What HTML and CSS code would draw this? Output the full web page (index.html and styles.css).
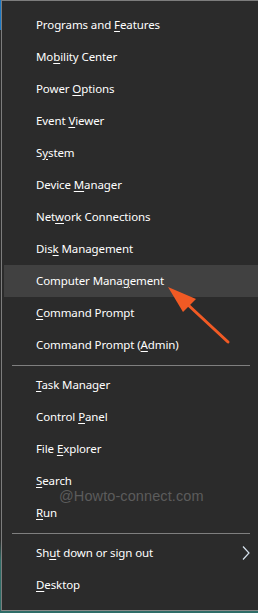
FILE: index.html
```html
<!DOCTYPE html>
<html lang="en">
<head>
  <meta charset="UTF-8" />
  <meta name="viewport" content="width=device-width, initial-scale=1.0" />
  <title>Quick Link Menu</title>
  <link rel="stylesheet" href="styles.css">
</head>
<body>

  <!-- Win+X menu -->
  <div class="menu">
    <div class="item"><span>Programs and <u>F</u>eatures</span></div>
    <div class="item"><span>Mo<u>b</u>ility Center</span></div>
    <div class="item"><span>Power <u>O</u>ptions</span></div>
    <div class="item"><span>Event <u>V</u>iewer</span></div>
    <div class="item"><span>S<u>y</u>stem</span></div>
    <div class="item"><span>Device <u>M</u>anager</span></div>
    <div class="item"><span>Net<u>w</u>ork Connections</span></div>
    <div class="item"><span>Dis<u>k</u> Management</span></div>
    <div class="item active"><span>Computer Mana<u>g</u>ement</span></div>
    <div class="item"><span><u>C</u>ommand Prompt</span></div>
    <div class="item"><span>Command Prompt (<u>A</u>dmin)</span></div>

    <div class="sep"></div>

    <div class="item"><span><u>T</u>ask Manager</span></div>
    <div class="item"><span>Control <u>P</u>anel</span></div>
    <div class="item"><span>File <u>E</u>xplorer</span></div>
    <div class="item"><span><u>S</u>earch</span></div>
    <div class="item"><span><u>R</u>un</span></div>

    <div class="sep"></div>

    <div class="item"><span>Sh<u>u</u>t down or sign out</span>
      <svg class="chevron" width="8" height="14" viewBox="0 0 8 14">
        <polyline points="1,0.5 7,7 1,13.5" fill="none" stroke="#d6e2ee" stroke-width="1.2" />
      </svg>
    </div>
    <div class="item"><span><u>D</u>esktop</span></div>

    <!-- watermark and pointer arrow drawn over the menu -->
    <div class="watermark">@Howto-connect.com</div>
    <svg class="pointer" width="258" height="613" viewBox="0 0 258 613">
      <line x1="186" y1="303" x2="228" y2="342" stroke="#f15a24" stroke-width="3" stroke-linecap="round" />
      <polygon points="168,287 196,299 183,312" fill="#f15a24" />
    </svg>
  </div>

</body>
</html>
```

FILE: styles.css
```css
html, body {
  margin: 0;
  height: 613px;
  overflow: hidden;
}

body {
  background: linear-gradient(180deg, #1b78c4 0, #1b78c4 30px, #2b2b2b 30px, #2b2b2b 540px, #2f6d68 560px);
  font-family: 'Segoe UI', 'Noto Sans', sans-serif;
}

.menu {
  position: relative;
  margin-left: 1px;
  height: 601px;
  padding: 8px 0 0 0;
  background: #2b2b2b;
  border-top: 1px solid #7d7d7d;
  border-left: 1px solid #7d7d7d;
  border-bottom: 1px solid #8a8a8a;
  box-sizing: content-box;
}

.item {
  display: flex;
  align-items: center;
  height: 32px;
  margin-left: 2px;
  padding: 0 8px 0 32px;
  color: #ffffff;
  font-size: 11.5px;
  letter-spacing: -0.1px;
  white-space: nowrap;
}

.item span {
  margin-bottom: 2px;
}

.item u {
  text-decoration: underline;
  text-underline-offset: 2px;
}

.item.active {
  background: #414141;
}

.chevron {
  margin-left: auto;
}

.sep {
  height: 1px;
  margin: 4px 8px 3px 10px;
  background: #7f7f7f;
}

.watermark {
  position: absolute;
  top: 487px;
  left: 57px;
  color: #5c5c5c;
  font-family: 'Liberation Sans', Arial, sans-serif;
  font-size: 14.5px;
  letter-spacing: 0.1px;
}

.pointer {
  position: absolute;
  top: -1px;
  left: -2px;
}
```
